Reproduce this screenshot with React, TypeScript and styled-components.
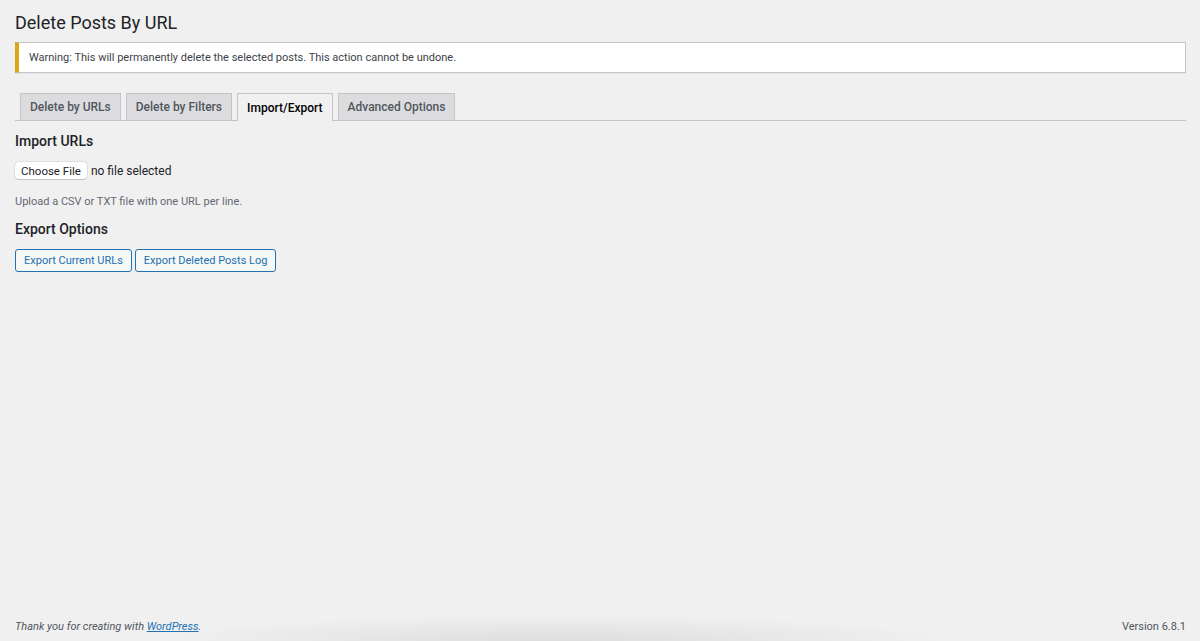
import { createGlobalStyle } from "styled-components";
import styled from "styled-components";

const GlobalStyle = createGlobalStyle`
  html, body {
    margin: 0;
    padding: 0;
    background: #f0f0f1;
  }
  body {
    font-family: Roboto, "Noto Sans", sans-serif;
    color: #1d2327;
  }
  #root {
    min-height: 100vh;
  }
`

const Layout = styled.div`
  display: flex;
  flex-direction: column;
  min-height: 100vh;
  box-sizing: border-box;
  padding: 0 14px 0 15px;
`

const Content = styled.main`
  flex: 1;
`

const PageTitle = styled.h1`
  margin: 0;
  padding: 12px 0 0;
  font-size: 18px;
  font-weight: 400;
  line-height: 22px;
  color: #1d2327;
`

const Notice = styled.div`
  margin-top: 8px;
  height: 31px;
  box-sizing: border-box;
  display: flex;
  align-items: center;
  padding: 0 10px;
  background: #fff;
  border: 1px solid #c3c4c7;
  border-left: 4px solid #dba617;
  box-shadow: 0 1px 1px rgba(0, 0, 0, 0.04);
  font-size: 11px;
  color: #3c434a;
`

const TabBar = styled.nav`
  display: flex;
  margin-top: 20px;
  padding-left: 5px;
  border-bottom: 1px solid #c3c4c7;
  gap: 5px;
`

const Tab = styled.a<{ $active?: boolean }>`
  display: flex;
  align-items: center;
  box-sizing: border-box;
  padding: 0 9px;
  border: 1px solid #c3c4c7;
  border-bottom: none;
  margin-bottom: ${(p) => (p.$active ? "-1px" : "0")};
  height: ${(p) => (p.$active ? "28px" : "27px")};
  background: ${(p) => (p.$active ? "#f0f0f1" : "#dcdcde")};
  color: ${(p) => (p.$active ? "#000" : "#50575e")};
  font-size: 12px;
  font-weight: 500;
  text-decoration: none;
  cursor: pointer;
`

const SectionTitle = styled.h2`
  margin: 12px 0 0;
  font-size: 14px;
  font-weight: 500;
  line-height: 16px;
  color: #1d2327;
`

const FileRow = styled.div`
  display: flex;
  align-items: center;
  gap: 4px;
  margin-top: 13px;
  font-size: 12px;
  color: #1d2327;
`

const FileButton = styled.button`
  height: 17px;
  padding: 0 6px;
  background: #fff;
  border: none;
  border-radius: 4px;
  box-shadow: 0 0 0 0.5px rgba(0, 0, 0, 0.12), 0 0.5px 1px rgba(0, 0, 0, 0.15);
  font-family: inherit;
  font-size: 11.5px;
  color: #1d2327;
`

const Hint = styled.p`
  margin: 16px 0 0;
  font-size: 11px;
  line-height: 14px;
  color: #646970;
`

const ButtonRow = styled.div`
  display: flex;
  gap: 3px;
  margin-top: 12px;
`

const OutlineButton = styled.button`
  height: 23px;
  padding: 0 8px;
  background: #f6f7f7;
  border: 1px solid #2271b1;
  border-radius: 3px;
  color: #2271b1;
  font-family: inherit;
  font-size: 11px;
  cursor: pointer;
`

const Footer = styled.footer`
  display: flex;
  justify-content: space-between;
  align-items: center;
  padding: 0 0 4px;
  height: 22px;
  font-size: 11px;
  color: #50575e;
  background: radial-gradient(ellipse 400px 26px at 540px 100%, rgba(0, 0, 0, 0.08), transparent);
`

const Thanks = styled.span`
  font-style: italic;
  a {
    color: #2271b1;
  }
`

const tabs = ["Delete by URLs", "Delete by Filters", "Import/Export", "Advanced Options"];

export default function App() {
  return (
    <>
      <GlobalStyle />
      <Layout>
        <Content>
          <PageTitle>Delete Posts By URL</PageTitle>
          <Notice>
            Warning: This will permanently delete the selected posts. This action cannot be undone.
          </Notice>
          <TabBar>
            {tabs.map((t) => (
              <Tab key={t} $active={t === "Import/Export"}>
                {t}
              </Tab>
            ))}
          </TabBar>
          <SectionTitle>Import URLs</SectionTitle>
          <FileRow>
            <FileButton>Choose File</FileButton>
            <span>no file selected</span>
          </FileRow>
          <Hint>Upload a CSV or TXT file with one URL per line.</Hint>
          <SectionTitle>Export Options</SectionTitle>
          <ButtonRow>
            <OutlineButton>Export Current URLs</OutlineButton>
            <OutlineButton>Export Deleted Posts Log</OutlineButton>
          </ButtonRow>
        </Content>
        <Footer>
          <Thanks>
            Thank you for creating with <a href="#">WordPress</a>.
          </Thanks>
          <span>Version 6.8.1</span>
        </Footer>
      </Layout>
    </>
  );
}
